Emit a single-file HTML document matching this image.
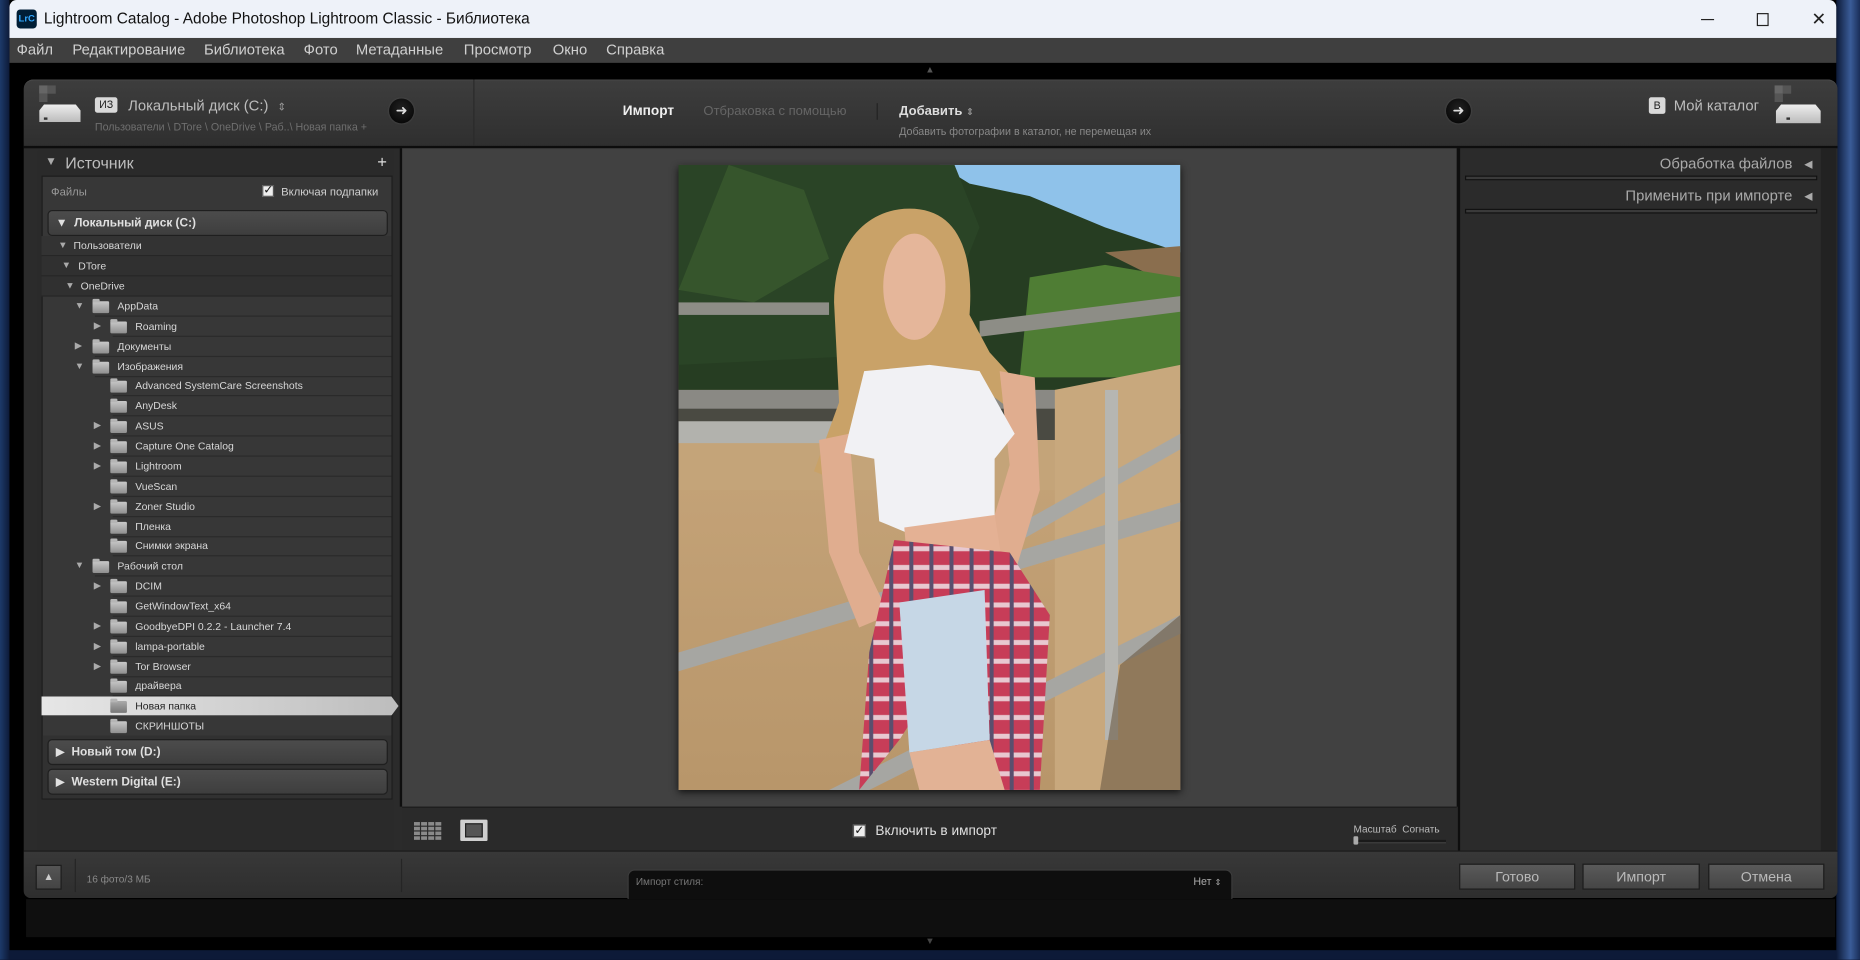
<!DOCTYPE html>
<html><head><meta charset="utf-8">
<style>
*{margin:0;padding:0;box-sizing:border-box}
html,body{width:1860px;height:960px;overflow:hidden;background:#0c1630}
body{font-family:"Liberation Sans","DejaVu Sans",sans-serif}
#root{position:absolute;left:0;top:0;width:1568px;height:809.4px;transform:scale(1.18622);transform-origin:0 0;
background:linear-gradient(90deg,#1d3a6a 0,#0d1a38 8px,#0d1a38 1548px,#3a5c98 1560px,#1a2e58 1568px)}
.a{position:absolute}
.t{position:absolute;white-space:nowrap}
.win{left:8px;top:0;width:1540px;height:801px;background:#000}
.title{left:8px;top:0;width:1540px;height:32px;background:#eef2f9;border-radius:6px 6px 0 0}
.menu{left:8px;top:32px;width:1540px;height:21px;background:#3f3f3f}
.menu span{position:absolute;top:3px;font-size:12.5px;color:#d0d0d0}
.row{position:absolute;left:35px;width:295px;height:17px}
.row .tx{position:absolute;top:3px;font-size:8.8px;color:#d8d8d8}
.row .ln{position:absolute;right:0;bottom:0;height:1px;background:#2a2a2a}
.fold{position:absolute;top:4px;width:14px;height:10px;background:linear-gradient(#c9c9c9,#8f8f8f);border-radius:1px}
.fold:before{content:"";position:absolute;left:0;top:-2px;width:6px;height:3px;background:#b5b5b5;border-radius:1px 1px 0 0}
.tri{position:absolute;top:3px;font-size:8px;color:#aaa}
.bar{position:absolute;left:40px;width:287px;height:22px;border-radius:4px;background:linear-gradient(#4c4c4c,#3e3e3e);border:1px solid #1f1f1f;color:#e0e0e0;font-size:10px;font-weight:bold;padding:5px 0 0 6px}
.btn{position:absolute;top:728px;height:22px;background:linear-gradient(#5a5a5a,#454545);border:1px solid #1d1d1d;color:#b9b9b9;font-size:12px;text-align:center;line-height:20px}
</style></head><body>
<div id="root">
<div class="a win"></div>
<div class="a title"></div>
<div class="a" style="left:14px;top:8px;width:17px;height:16px;background:#001e36;border-radius:3px;color:#31a8ff;font-size:8px;font-weight:bold;line-height:16px;text-align:center">LrC</div>
<div class="t" style="left:37px;top:8px;font-size:13px;color:#111">Lightroom Catalog - Adobe Photoshop Lightroom Classic - Библиотека</div>
<div class="a" style="left:1434px;top:16px;width:11px;height:1px;background:#222"></div>
<div class="a" style="left:1481px;top:11px;width:10px;height:11px;border:1px solid #222"></div>
<div class="t" style="left:1527px;top:7px;font-size:15px;color:#222">✕</div>
<div class="a menu">
<span style="left:6px">Файл</span><span style="left:53px">Редактирование</span><span style="left:164px">Библиотека</span><span style="left:248px">Фото</span><span style="left:292px">Метаданные</span><span style="left:383px">Просмотр</span><span style="left:458px">Окно</span><span style="left:503px">Справка</span>
</div>
<div class="t" style="left:780px;top:54px;font-size:8px;color:#555">▲</div>

<!-- dialog -->
<div class="a" style="left:20px;top:67px;width:1529px;height:690px;background:#2b2b2b;border-radius:8px 8px 6px 6px"></div>
<div class="a" style="left:20px;top:67px;width:1529px;height:56px;background:linear-gradient(#3d3d3d,#2f2f2f);border-radius:8px 8px 0 0;border-top:1px solid #4a4a4a"></div>
<div class="a" style="left:20px;top:123px;width:1529px;height:2px;background:#0d0d0d"></div>
<div class="a" style="left:399px;top:67px;width:1px;height:56px;background:#2a2a2a"></div>
<div class="a" style="left:33px;top:72px;width:7px;height:7px;background:#666"></div>
<div class="a" style="left:40px;top:72px;width:7px;height:7px;background:#555"></div>
<div class="a" style="left:33px;top:79px;width:7px;height:7px;background:#555"></div>
<div class="a" style="left:33px;top:88px;width:35px;height:15px;background:linear-gradient(#eee,#bbb);clip-path:polygon(12% 0,88% 0,100% 35%,100% 100%,0 100%,0 35%)"></div>
<div class="a" style="left:37px;top:99px;width:3px;height:2px;background:#333"></div>
<div class="a" style="left:80px;top:82px;width:19px;height:13px;background:#d9d9d9;border-radius:2px;font-size:9px;color:#222;text-align:center;line-height:13px">ИЗ</div>
<div class="t" style="left:108px;top:82px;font-size:12.5px;color:#bdbdbd">Локальный диск (C:) <span style="font-size:9px;color:#999;margin-left:4px">⇕</span></div>
<div class="t" style="left:80px;top:102px;font-size:9px;color:#6f6f6f">Пользователи \ DTore \ OneDrive \ Раб..\ Новая папка +</div>
<div class="a" style="left:328px;top:83px;width:21px;height:21px;border-radius:50%;background:radial-gradient(circle at 50% 40%,#222,#000);box-shadow:0 0 2px #555;color:#ddd;font-size:12px;text-align:center;line-height:20px">➜</div>
<div class="t" style="left:525px;top:88px;font-size:11.5px;font-weight:bold;color:#f0f0f0">Импорт</div>
<div class="t" style="left:593px;top:88px;font-size:11px;color:#656565">Отбраковка с помощью</div>
<div class="a" style="left:739px;top:87px;width:1px;height:14px;background:#222"></div>
<div class="t" style="left:758px;top:88px;font-size:11px;font-weight:bold;color:#ddd">Добавить <span style="font-size:8px;color:#999">⇕</span></div>
<div class="t" style="left:758px;top:106px;font-size:9px;color:#888">Добавить фотографии в каталог, не перемещая их</div>
<div class="a" style="left:1219px;top:83px;width:21px;height:21px;border-radius:50%;background:radial-gradient(circle at 50% 40%,#222,#000);box-shadow:0 0 2px #555;color:#ddd;font-size:12px;text-align:center;line-height:20px">➜</div>
<div class="a" style="left:1390px;top:82px;width:14px;height:14px;background:#d9d9d9;border-radius:2px;font-size:9px;color:#222;text-align:center;line-height:14px">В</div>
<div class="t" style="left:1411px;top:82px;font-size:12.5px;color:#bdbdbd">Мой каталог</div>
<div class="a" style="left:1496px;top:72px;width:7px;height:7px;background:#666"></div>
<div class="a" style="left:1503px;top:72px;width:7px;height:7px;background:#555"></div>
<div class="a" style="left:1496px;top:79px;width:7px;height:7px;background:#555"></div>
<div class="a" style="left:1497px;top:88px;width:38px;height:16px;background:linear-gradient(#eee,#bbb);clip-path:polygon(12% 0,88% 0,100% 35%,100% 100%,0 100%,0 35%)"></div>
<div class="a" style="left:1506px;top:99px;width:3px;height:2px;background:#333"></div>

<!-- left panel -->
<div class="a" style="left:32px;top:127px;width:300px;height:590px;background:#2a2a2a"></div>
<div class="t" style="left:38px;top:131px;font-size:10px;color:#aaa">▼</div>
<div class="t" style="left:55px;top:130px;font-size:13.5px;color:#bdbdbd">Источник</div>
<div class="t" style="left:318px;top:128px;font-size:14px;color:#ddd">+</div>
<div class="a" style="left:35px;top:148px;width:296px;height:526px;background:#373737;border:1px solid #1c1c1c"></div>
<div class="t" style="left:43px;top:157px;font-size:9.5px;color:#9a9a9a">Файлы</div>
<div class="a" style="left:221px;top:156px;width:10px;height:10px;background:#eee;border:1px solid #555;font-size:10px;line-height:8px;color:#111;text-align:center">✓</div>
<div class="t" style="left:237px;top:157px;font-size:9.5px;color:#d0d0d0">Включая подпапки</div>
<div class="bar" style="top:177px">▼&nbsp; Локальный диск (C:)</div>

<div class="row" style="top:199px;background:#333"><span class="tri" style="left:14px">▼</span><span class="tx" style="left:27px">Пользователи</span><div class="ln" style="width:295px;background:#262626"></div></div>
<div class="row" style="top:216px;background:#303030"><span class="tri" style="left:17px">▼</span><span class="tx" style="left:31px">DTore</span><div class="ln" style="width:295px;background:#262626"></div></div>
<div class="row" style="top:233px;background:#303030"><span class="tri" style="left:20px">▼</span><span class="tx" style="left:33px">OneDrive</span><div class="ln" style="width:295px;background:#262626"></div></div>

<div class="row" style="top:250px"><span class="tri" style="left:28px">▼</span><div class="fold" style="left:43px"></div><span class="tx" style="left:64px">AppData</span><div class="ln" style="width:250px"></div></div>
<div class="row" style="top:266.9px"><span class="tri" style="left:44px">▶</span><div class="fold" style="left:58px"></div><span class="tx" style="left:79px">Roaming</span><div class="ln" style="width:235px"></div></div>
<div class="row" style="top:283.7px"><span class="tri" style="left:28px">▶</span><div class="fold" style="left:43px"></div><span class="tx" style="left:64px">Документы</span><div class="ln" style="width:250px"></div></div>
<div class="row" style="top:300.6px"><span class="tri" style="left:28px">▼</span><div class="fold" style="left:43px"></div><span class="tx" style="left:64px">Изображения</span><div class="ln" style="width:250px"></div></div>
<div class="row" style="top:317.4px"><div class="fold" style="left:58px"></div><span class="tx" style="left:79px">Advanced SystemCare Screenshots</span><div class="ln" style="width:235px"></div></div>
<div class="row" style="top:334.3px"><div class="fold" style="left:58px"></div><span class="tx" style="left:79px">AnyDesk</span><div class="ln" style="width:235px"></div></div>
<div class="row" style="top:351.2px"><span class="tri" style="left:44px">▶</span><div class="fold" style="left:58px"></div><span class="tx" style="left:79px">ASUS</span><div class="ln" style="width:235px"></div></div>
<div class="row" style="top:368px"><span class="tri" style="left:44px">▶</span><div class="fold" style="left:58px"></div><span class="tx" style="left:79px">Capture One Catalog</span><div class="ln" style="width:235px"></div></div>
<div class="row" style="top:384.9px"><span class="tri" style="left:44px">▶</span><div class="fold" style="left:58px"></div><span class="tx" style="left:79px">Lightroom</span><div class="ln" style="width:235px"></div></div>
<div class="row" style="top:401.7px"><div class="fold" style="left:58px"></div><span class="tx" style="left:79px">VueScan</span><div class="ln" style="width:235px"></div></div>
<div class="row" style="top:418.6px"><span class="tri" style="left:44px">▶</span><div class="fold" style="left:58px"></div><span class="tx" style="left:79px">Zoner Studio</span><div class="ln" style="width:235px"></div></div>
<div class="row" style="top:435.5px"><div class="fold" style="left:58px"></div><span class="tx" style="left:79px">Пленка</span><div class="ln" style="width:235px"></div></div>
<div class="row" style="top:452.3px"><div class="fold" style="left:58px"></div><span class="tx" style="left:79px">Снимки экрана</span><div class="ln" style="width:235px"></div></div>
<div class="row" style="top:469.2px"><span class="tri" style="left:28px">▼</span><div class="fold" style="left:43px"></div><span class="tx" style="left:64px">Рабочий стол</span><div class="ln" style="width:250px"></div></div>
<div class="row" style="top:486px"><span class="tri" style="left:44px">▶</span><div class="fold" style="left:58px"></div><span class="tx" style="left:79px">DCIM</span><div class="ln" style="width:235px"></div></div>
<div class="row" style="top:502.9px"><div class="fold" style="left:58px"></div><span class="tx" style="left:79px">GetWindowText_x64</span><div class="ln" style="width:235px"></div></div>
<div class="row" style="top:519.8px"><span class="tri" style="left:44px">▶</span><div class="fold" style="left:58px"></div><span class="tx" style="left:79px">GoodbyeDPI 0.2.2 - Launcher 7.4</span><div class="ln" style="width:235px"></div></div>
<div class="row" style="top:536.6px"><span class="tri" style="left:44px">▶</span><div class="fold" style="left:58px"></div><span class="tx" style="left:79px">lampa-portable</span><div class="ln" style="width:235px"></div></div>
<div class="row" style="top:553.5px"><span class="tri" style="left:44px">▶</span><div class="fold" style="left:58px"></div><span class="tx" style="left:79px">Tor Browser</span><div class="ln" style="width:235px"></div></div>
<div class="row" style="top:570.3px"><div class="fold" style="left:58px"></div><span class="tx" style="left:79px">драйвера</span><div class="ln" style="width:235px"></div></div>
<div class="a" style="left:35px;top:587.2px;width:301px;height:16px;background:linear-gradient(90deg,#e6e6e6,#cfcfcf 60%,#bdbdbd);clip-path:polygon(0 0,98% 0,100% 50%,98% 100%,0 100%)"></div>
<div class="row" style="top:587.2px"><div class="fold" style="left:58px;background:linear-gradient(#aaa,#777)"></div><span class="tx" style="left:79px;color:#222">Новая папка</span></div>
<div class="row" style="top:604px"><div class="fold" style="left:58px"></div><span class="tx" style="left:79px">СКРИНШОТЫ</span></div>
<div class="a" style="left:36px;top:620px;width:294px;height:53px;background:#313131"></div>
<div class="bar" style="top:623px">▶&nbsp; Новый том (D:)</div>
<div class="bar" style="top:648px">▶&nbsp; Western Digital (E:)</div>

<!-- center -->
<div class="a" style="left:337px;top:125px;width:893px;height:555px;background:#0e0e0e"></div>
<div class="a" style="left:339px;top:125px;width:889px;height:555px;background:#414141"></div>
<div class="a" style="left:572px;top:139px;width:423px;height:527px;box-shadow:0 2px 6px #111"></div>
<svg class="a" style="left:572px;top:139px" width="423" height="527" viewBox="0 0 100 100" preserveAspectRatio="none">
<defs>
<linearGradient id="sand" x1="0" y1="0" x2="0" y2="1"><stop offset="0" stop-color="#cfae84"/><stop offset="1" stop-color="#b8966a"/></linearGradient>
<pattern id="plaid" width="4" height="3" patternUnits="userSpaceOnUse"><rect width="4" height="3" fill="#c73d58"/><rect x="0" y="1" width="4" height="0.8" fill="#e8c8d0"/><rect x="2" y="0" width="0.8" height="3" fill="#5a4f6e"/></pattern>
</defs>
<rect width="100" height="100" fill="url(#sand)"/>
<rect width="100" height="36" fill="#263d22"/>
<path d="M52 0H100V14L85 10 70 5 58 3Z" fill="#8fc2ea"/>
<path d="M85 14 100 13V20Z" fill="#8a6e4e"/>
<path d="M70 18 85 16 100 18V34H68Z" fill="#4f7d34"/>
<path d="M0 0H55L60 10 50 30 0 32Z" fill="#2a4426"/>
<path d="M10 0 25 4 30 15 15 22 0 20Z" fill="#36552c"/>
<rect x="0" y="22" width="30" height="2" fill="#8d8d86"/>
<path d="M60 25 100 21V23.5L60 27.5Z" fill="#8d8d86"/>
<rect x="0" y="36" width="100" height="14" fill="#4a4a42"/>
<rect x="0" y="36" width="100" height="3" fill="#8a8984"/>
<path d="M0 44H100V52H0Z" fill="#c4a479"/>
<path d="M75 36 100 32V100H75Z" fill="#c8a87d"/>
<path d="M40 70 100 43V45.5L40 73Z" fill="#a8a8a4"/>
<path d="M0 78 100 54V57L0 81Z" fill="#a6a6a2"/>
<path d="M30 100 100 72V75L38 100Z" fill="#a6a6a2"/>
<path d="M0 41H55V44.5H0Z" fill="#b2b2ad"/>
<rect x="85" y="36" width="2.6" height="56" fill="#b6b6b2"/>
<path d="M88 80 100 72V100H84Z" fill="#6a5a45" opacity=".6"/>
<!-- hair -->
<path d="M31 22C31 12 38 7 46 7 55 7 59 13 58 24L62 30 70 37 66 39 56 33 46 33 36 40 30 50 27 49 32 38Z" fill="#c9a268"/>
<ellipse cx="47" cy="19.5" rx="6.2" ry="8.5" fill="#e5b69a"/>
<!-- arms -->
<path d="M28 44 34 43 36 62 42 72 36 74 30 62Z" fill="#e0ad8f"/>
<path d="M64 33 71 34 72 52 66 68 60 64 66 48Z" fill="#e0ad8f"/>
<!-- shirt -->
<path d="M37 33 50 32 60 33 67 43 63 47 63 57 46 59 40 57 39 47 33 46Z" fill="#f1f1f4"/>
<path d="M45 58 63 56 65 66 46 68Z" fill="#e4b194"/>
<!-- plaid -->
<path d="M43 60 66 62 74 72 72 100 57 100 52 82 44 92 36 100 38 78Z" fill="url(#plaid)"/>
<path d="M44 70 61 68 62 92 46 94Z" fill="#c6d7e6"/>
<path d="M46 94 62 92 65 100 48 100Z" fill="#e2b295"/>
</svg>

<div class="a" style="left:339px;top:680px;width:889px;height:37px;background:#2a2a2a;border-top:1px solid #1b1b1b"></div>
<svg class="a" style="left:349px;top:693px" width="25" height="16"><g fill="#8a8a8a"><rect x="0" y="0" width="5" height="3"/><rect x="6" y="0" width="5" height="3"/><rect x="12" y="0" width="5" height="3"/><rect x="18" y="0" width="5" height="3"/><rect x="0" y="4" width="5" height="3"/><rect x="6" y="4" width="5" height="3"/><rect x="12" y="4" width="5" height="3"/><rect x="18" y="4" width="5" height="3"/><rect x="0" y="8" width="5" height="3"/><rect x="6" y="8" width="5" height="3"/><rect x="12" y="8" width="5" height="3"/><rect x="18" y="8" width="5" height="3"/><rect x="0" y="12" width="5" height="3"/><rect x="6" y="12" width="5" height="3"/><rect x="12" y="12" width="5" height="3"/><rect x="18" y="12" width="5" height="3"/></g></svg>
<div class="a" style="left:388px;top:691px;width:23px;height:18px;background:#cfcfcf;border-radius:1px"></div>
<div class="a" style="left:392px;top:694px;width:15px;height:12px;background:#555;border:1px solid #222"></div>
<div class="a" style="left:719px;top:695px;width:11px;height:11px;background:#eee;border:1px solid #555;font-size:10px;line-height:9px;color:#111;text-align:center">✓</div>
<div class="t" style="left:738px;top:695px;font-size:11.5px;color:#e0e0e0">Включить в импорт</div>
<div class="t" style="left:1141px;top:694px;font-size:8.5px;color:#bbb">Масштаб &nbsp;Согнать</div>
<div class="a" style="left:1141px;top:708px;width:78px;height:3px;background:#1a1a1a;border-bottom:1px solid #444"></div>
<div class="a" style="left:1141px;top:705px;width:4px;height:7px;background:#aaa;border-radius:1px"></div>

<!-- right panel -->
<div class="a" style="left:1229px;top:125px;width:2px;height:592px;background:#0e0e0e"></div>
<div class="a" style="left:1231px;top:125px;width:304px;height:592px;background:#2b2b2b"></div>
<div class="a" style="left:1535px;top:125px;width:13px;height:592px;background:#222"></div>
<div class="t" style="right:57px;top:131px;font-size:12.5px;color:#aaa">Обработка файлов</div>
<div class="t" style="left:1521px;top:133px;font-size:9px;color:#aaa">◀</div>
<div class="a" style="left:1235px;top:148px;width:297px;height:4px;border:1px solid #111;background:#3a3a3a"></div>
<div class="t" style="right:57px;top:158px;font-size:12.5px;color:#aaa">Применить при импорте</div>
<div class="t" style="left:1521px;top:160px;font-size:9px;color:#aaa">◀</div>
<div class="a" style="left:1235px;top:176px;width:297px;height:4px;border:1px solid #111;background:#3a3a3a"></div>

<!-- bottom bar -->
<div class="a" style="left:20px;top:717px;width:1529px;height:40px;background:linear-gradient(#383838,#2e2e2e);border-radius:0 0 6px 6px;border-top:1px solid #1a1a1a"></div>
<div class="a" style="left:30px;top:729px;width:22px;height:21px;background:linear-gradient(#555,#444);border:1px solid #1d1d1d;color:#ccc;font-size:9px;text-align:center;line-height:19px">▲</div>
<div class="a" style="left:63px;top:724px;width:1px;height:28px;background:#252525"></div>
<div class="a" style="left:338px;top:724px;width:1px;height:28px;background:#252525"></div>
<div class="t" style="left:73px;top:736px;font-size:8.5px;color:#8a8a8a">16 фото/3 МБ</div>
<div class="a" style="left:529px;top:733px;width:510px;height:25px;background:#0e0e0e;border-radius:6px 6px 0 0;border:1px solid #3c3c3c;border-bottom:none"></div>
<div class="t" style="left:536px;top:738px;font-size:8.5px;color:#777">Импорт стиля:</div>
<div class="t" style="left:1006px;top:738px;font-size:9px;color:#aaa">Нет <span style="font-size:7px">⇕</span></div>
<div class="btn" style="left:1230px;width:98px">Готово</div>
<div class="btn" style="left:1334px;width:99px">Импорт</div>
<div class="btn" style="left:1440px;width:98px">Отмена</div>
<div class="a" style="left:22px;top:758px;width:1525px;height:32px;background:#0f0f0f"></div>
<div class="t" style="left:780px;top:789px;font-size:8px;color:#444">▼</div>
</div>
</body></html>
